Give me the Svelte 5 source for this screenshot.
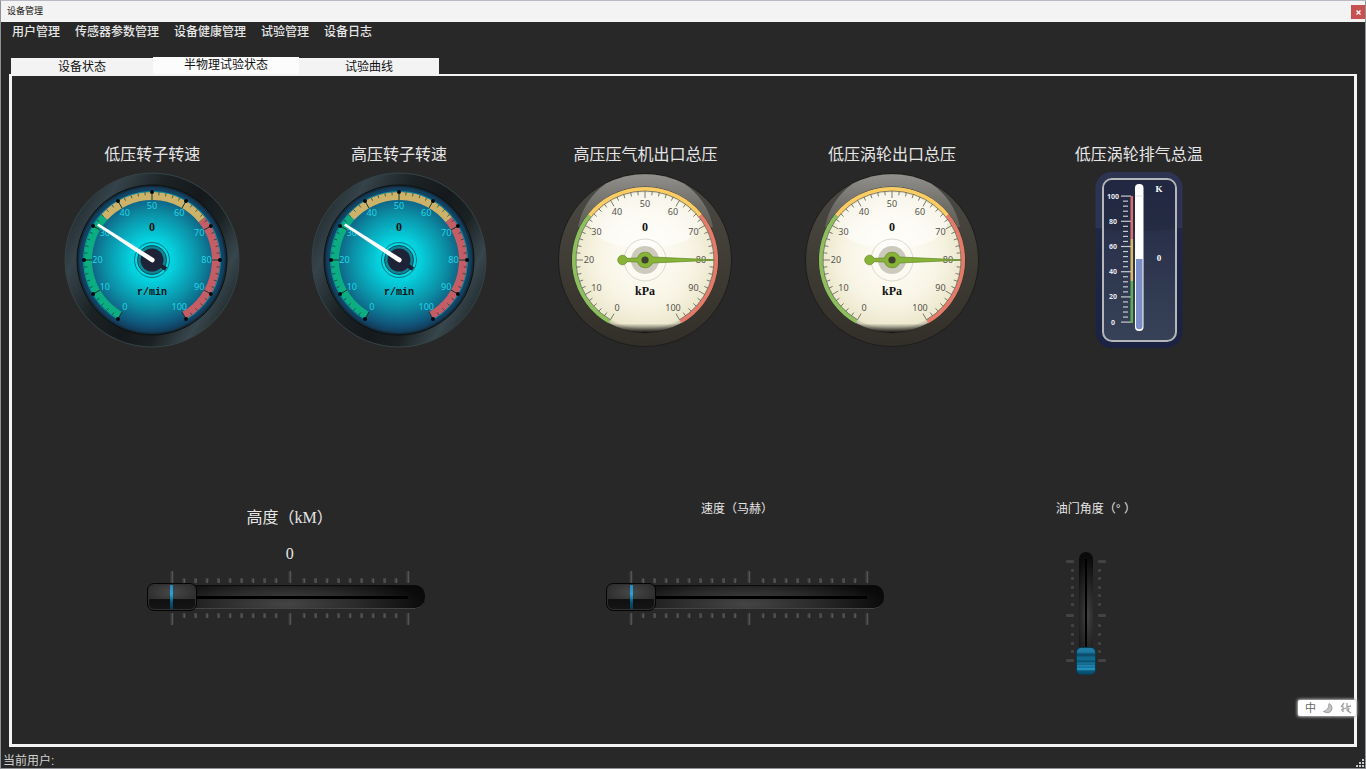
<script lang="ts">
  interface Gauge {
    title: string;
    unit: string;
    kind: "blue" | "light";
  }

  const menus = ["用户管理", "传感器参数管理", "设备健康管理", "试验管理", "设备日志"];
  const tabs = ["设备状态", "半物理试验状态", "试验曲线"];
  const gauges: Gauge[] = [
    { title: "低压转子转速", unit: "r/min", kind: "blue" },
    { title: "高压转子转速", unit: "r/min", kind: "blue" },
    { title: "高压压气机出口总压", unit: "kPa", kind: "light" },
    { title: "低压涡轮出口总压", unit: "kPa", kind: "light" },
  ];

  let activeTab = $state(1);
  let height = $state(0);
  let speed = $state(0);
  let throttle = $state(0);

  // 0..100 runs clockwise from lower left to lower right, 3 degrees per unit
  function pt(value: number, r: number) {
    const a = ((value * 3 + 120) * Math.PI) / 180;
    return { x: 88 + r * Math.cos(a), y: 88 + r * Math.sin(a) };
  }

  // spans up to 60 units, longer ones are drawn in two halves
  function arc(from: number, to: number, r: number) {
    const a = pt(from, r);
    const b = pt(to, r);
    return `M${a.x} ${a.y}A${r} ${r} 0 0 1 ${b.x} ${b.y}`;
  }

  const tens = Array.from({ length: 11 }, (_, i) => i * 10);
  const ticks = Array.from({ length: 51 }, (_, i) => i * 2);

  // slider scale, major marks at both ends and in the middle
  const hMajor = [25, 143, 261];
  const hMinor = [...Array(9).keys()].flatMap((i) => [37 + i * 11.5, 157 + i * 11.5]);
  const vMajor = [9, 63, 108];
  const vMinor = [18, 26, 35, 43, 52, 73, 82, 91, 99];

  const thermoMarks = Array.from({ length: 26 }, (_, i) => ({ v: 100 - i * 4, y: 24.5 + i * 5.04 }));
</script>

{#snippet defs()}
  <svg class="defs" width="0" height="0" aria-hidden="true">
    <defs>
      <linearGradient id="rim" x1="0" y1="0.22" x2="1" y2="0.78">
        <stop offset="0" stop-color="#20282b" />
        <stop offset="0.16" stop-color="#35434a" />
        <stop offset="0.36" stop-color="#1c2325" />
        <stop offset="0.55" stop-color="#15191b" />
        <stop offset="0.7" stop-color="#1b2224" />
        <stop offset="0.85" stop-color="#38474d" />
        <stop offset="1" stop-color="#1b2224" />
      </linearGradient>
      <radialGradient id="face">
        <stop offset="0" stop-color="#00eef5" />
        <stop offset="0.3" stop-color="#05cfdc" />
        <stop offset="0.65" stop-color="#0b8ea5" />
        <stop offset="0.9" stop-color="#11547a" />
        <stop offset="1" stop-color="#123a57" />
      </radialGradient>
      <linearGradient id="bezel" x1="0" y1="0" x2="0" y2="1">
        <stop offset="0" stop-color="#4d4b46" />
        <stop offset="0.5" stop-color="#3f3d35" />
        <stop offset="1" stop-color="#312f28" />
      </linearGradient>
      <linearGradient id="glare" x1="0" y1="0" x2="0" y2="1">
        <stop offset="0" stop-color="#92908c" />
        <stop offset="0.6" stop-color="#706e69" />
        <stop offset="1" stop-color="#625f57" />
      </linearGradient>
      <radialGradient id="cream" cx="0.5" cy="0.48" r="0.52">
        <stop offset="0" stop-color="#fffef9" />
        <stop offset="0.6" stop-color="#f8f5e6" />
        <stop offset="0.93" stop-color="#ece8cd" />
        <stop offset="1" stop-color="#a9a693" />
      </radialGradient>
      <linearGradient id="lowshade" x1="0" y1="0" x2="0" y2="1">
        <stop offset="0.935" stop-color="#000" stop-opacity="0" />
        <stop offset="1" stop-color="#000" stop-opacity="0.9" />
      </linearGradient>
      <linearGradient id="plate" x1="0" y1="0" x2="0" y2="1">
        <stop offset="0" stop-color="#222943" />
        <stop offset="1" stop-color="#374258" />
      </linearGradient>
      <linearGradient id="case" x1="0" y1="0" x2="0" y2="1">
        <stop offset="0" stop-color="#232a46" />
        <stop offset="1" stop-color="#1b2242" />
      </linearGradient>
    </defs>
  </svg>
{/snippet}

{#snippet blueGauge(unit: string)}
  <svg class="dial blue" width="176" height="176" viewBox="0 0 176 176">
    <circle cx="88" cy="88" r="87" fill="url(#rim)" stroke="#344448" />
    <circle cx="88" cy="88" r="75" fill="#142a38" stroke="#0c1012" />
    <circle cx="88" cy="88" r="73" fill="url(#face)" />
    <path d={arc(0, 50, 68.5) + arc(50, 100, 68.5)} fill="none" stroke="#0997ab" />
    <path d={arc(0, 34, 64)} class="band" stroke="#0cad82" />
    <path d={arc(34, 67, 64)} class="band" stroke="#cdb369" />
    <path d={arc(67, 100, 64)} class="band" stroke="#c45d65" />
    {#each ticks as v}
      {@const a = pt(v, v % 10 ? 65 : 60)}
      {@const b = pt(v, 68)}
      <line x1={a.x} y1={a.y} x2={b.x} y2={b.y} stroke="#17352f" stroke-width={v % 10 ? 0.7 : 1} />
    {/each}
    {#each tens as v}
      {@const d = pt(v, 68)}
      {@const l = pt(v, 54.5)}
      <circle cx={d.x} cy={d.y} r="2" fill="#02090c" />
      <text class="num" x={l.x} y={l.y + 3}>{v}</text>
    {/each}
    <circle cx="88" cy="88" r="17.5" fill="none" stroke="#0b5d68" stroke-width="0.8" />
    <circle cx="88" cy="88" r="14.5" fill="#0e8797" stroke="#0b3440" stroke-width="0.8" />
    <path d="M88 88L102 97" stroke="#1c2030" stroke-width="4" />
    <circle cx="88" cy="88" r="11.5" fill="#1f2337" />
    <path d="M33 53.500L34.500 51.500L89.500 86A2 2 0 0 1 87 90Z" fill="#fff" />
    <text class="val" x="88" y="59">0</text>
    <text class="unit mono" x="88" y="123">{unit}</text>
  </svg>
{/snippet}

{#snippet lightGauge(unit: string)}
  <svg class="dial light" width="176" height="176" viewBox="0 0 176 176">
    <circle cx="88" cy="88" r="86.5" fill="url(#bezel)" stroke="#1e1d1a" />
    <path d="M21 55A70 70 0 0 1 49 11.500A86 86 0 0 1 127 11.500A70 70 0 0 1 156 55Z" fill="url(#glare)" />
    <circle cx="88" cy="88" r="73" fill="url(#cream)" stroke="#2b2a25" stroke-width="0.8" />
    <circle cx="88" cy="88" r="73" fill="url(#lowshade)" />
    <path d="M32 50A68 68 0 0 1 144 50Q137 76 88 76Q39 76 32 50Z" fill="#fff" opacity="0.5" />
    <path d={arc(0, 33, 71)} class="edge" stroke="#8cc05c" />
    <path d={arc(33, 67, 71)} class="edge" stroke="#fccd62" />
    <path d={arc(67, 100, 71)} class="edge" stroke="#e67a69" />
    <path d={arc(0, 50, 69) + arc(50, 100, 69)} fill="none" stroke="#5c5a50" stroke-width="0.7" />
    {#each ticks as v}
      {@const a = pt(v, v % 10 ? 65 : 62)}
      {@const b = pt(v, 69)}
      <line x1={a.x} y1={a.y} x2={b.x} y2={b.y} stroke="#5c5a50" stroke-width="0.8" />
    {/each}
    {#each tens as v}
      {@const l = pt(v, 56)}
      <text class="num" x={l.x} y={l.y + 3}>{v}</text>
    {/each}
    <circle cx="88" cy="88" r="21" fill="none" stroke="#d2d0c4" stroke-width="0.8" />
    <circle cx="88" cy="88" r="14" fill="#cccabc" />
    <path
      d="M70 86.300A4.800 4.800 0 1 0 70 89.700L80.500 90A8 8 0 0 0 95.500 91L157 88.200V87.800L95.500 85A8 8 0 0 0 80.500 86Z"
      fill="#87b336"
      stroke="#61852a"
      stroke-width="0.7"
    />
    <circle cx="88" cy="88" r="3.600" fill="#3e4030" />
    <text class="val" x="88" y="59">0</text>
    <text class="unit" x="88" y="123">{unit}</text>
  </svg>
{/snippet}

{#snippet scale(bottom: boolean)}
  <svg width="278" height="12" viewBox="0 0 278 12" aria-hidden="true">
    {#each hMajor as x}
      <rect x={x - 1.5} y="0" width="3" height="12" rx="1" fill="#3f3f3f" />
      <rect {x} y="0" width="1" height="12" fill="#545454" />
    {/each}
    {#each hMinor as x}
      <rect x={x - 1.5} y={bottom ? 0 : 7} width="3" height="5" rx="1" fill="#444" />
      <rect {x} y={bottom ? 1 : 8} width="1" height="4" fill="#595959" />
    {/each}
  </svg>
{/snippet}

{#snippet vscale(right: boolean)}
  <svg width="8" height="123" viewBox="0 0 8 123" aria-hidden="true">
    {#each vMajor as y}
      <rect x="0" y={y - 1} width="8" height="3" rx="1" fill="#434343" />
    {/each}
    {#each vMinor as y}
      <rect x={right ? 0 : 5} y={y - 1} width="3" height="3" rx="1" fill="#444" />
    {/each}
  </svg>
{/snippet}

<div class="window">
  {@render defs()}
  <header class="titlebar">
    <span>设备管理</span>
    <button class="close" aria-label="关闭">
      <svg width="5" height="5" viewBox="0 0 5 5"><path d="M0.500 0.500L4.500 4.500M4.500 0.500L0.500 4.500" stroke="#fff" stroke-width="1.300" /></svg>
    </button>
  </header>

  <nav class="menubar">
    {#each menus as m}
      <button>{m}</button>
    {/each}
  </nav>

  <div class="tabs" role="tablist">
    {#each tabs as t, i}
      <button role="tab" class:active={activeTab === i} aria-selected={activeTab === i} onclick={() => (activeTab = i)}>{t}</button>
    {/each}
  </div>

  <main class="panel">
    <section class="gauges">
      {#each gauges as g}
        <div class="gauge">
          <h2>{g.title}</h2>
          {#if g.kind === "blue"}
            {@render blueGauge(g.unit)}
          {:else}
            {@render lightGauge(g.unit)}
          {/if}
        </div>
      {/each}
      <div class="gauge">
        <h2>低压涡轮排气总温</h2>
        <svg class="thermo" width="88" height="176" viewBox="0 0 88 176">
          <rect x="0.500" y="0" width="87" height="176" rx="16" fill="url(#case)" />
          <path d="M0.500 56V16A16 16 0 0 1 16.500 0H71.500A16 16 0 0 1 87.500 16V56Q44 62 0.500 56Z" fill="#2c3452" />
          <rect x="8" y="7" width="73" height="162" rx="9" fill="url(#plate)" stroke="#b4b6ba" stroke-width="2" />
          <path d="M9 57V17A8 8 0 0 1 17 8H72A8 8 0 0 1 80 17V57Q44 61 9 57Z" fill="#20263d" opacity="0.5" />
          {#each thermoMarks as m}
            {#if m.v % 20 === 0}
              <rect x="26" y={m.y - 1} width="10" height="1.2" fill="#c8cad0" />
              <text class="tnum" x="18" y={m.y + 2}>{m.v}</text>
            {:else}
              <rect x="28" y={m.y - 1} width="5" height="1.2" fill="#c8cad0" />
            {/if}
          {/each}
          <rect x="35.500" y="24" width="2.500" height="43" fill="#da6e6c" />
          <rect x="35.500" y="67" width="2.500" height="42" fill="#dcb866" />
          <rect x="35.500" y="109" width="2.500" height="42" fill="#5fad52" />
          <rect x="40" y="12" width="8.500" height="147" rx="4" fill="#fff" />
          <path d="M41 87H47.500V154A3.200 3.200 0 0 1 41 154Z" fill="#7b8dc6" />
          <path d="M40 24H48.500" stroke="#ddd" stroke-width="0.800" />
          <text class="tval" x="64" y="20">K</text>
          <text class="tval" x="64" y="89">0</text>
        </svg>
      </div>
    </section>

    <section class="sliders">
      <div class="control alt">
        <label class="big" for="alt">高度（kM）</label>
        <output for="alt">{height}</output>
        <div class="hslider">
          {@render scale(false)}
          <input id="alt" type="range" min="0" max="100" bind:value={height} />
          {@render scale(true)}
        </div>
      </div>
      <div class="control mach">
        <label for="mach">速度（马赫）</label>
        <div class="hslider">
          {@render scale(false)}
          <input id="mach" type="range" min="0" max="100" bind:value={speed} />
          {@render scale(true)}
        </div>
      </div>
      <div class="control angle">
        <label for="angle">油门角度（°&nbsp;）</label>
        <div class="vslider">
          {@render vscale(false)}
          <input id="angle" type="range" min="0" max="100" bind:value={throttle} />
          {@render vscale(true)}
        </div>
      </div>
    </section>
  </main>

  <footer class="statusbar">
    <span>当前用户:</span>
    <svg width="9" height="9" viewBox="0 0 9 9" aria-hidden="true">
      <path d="M6 0h2v2h-2zM3 3h2v2h-2zM6 3h2v2h-2zM0 6h2v2h-2zM3 6h2v2h-2zM6 6h2v2h-2z" fill="#c9c9c9" />
    </svg>
  </footer>

  <div class="ime">
    <span>中</span>
    <svg width="10" height="12" viewBox="0 0 10 12"><path d="M6 1.500Q6 8 0.500 9.500Q7 13 9 7Q9.500 3 6 1.500Z" fill="#c4c4c4" stroke="#8d8d8d" stroke-width="0.800" /></svg>
    <svg width="12" height="12" viewBox="0 0 12 12"><path d="M4 1L1 5M3 4V10M1 8L6 6M7 1V8L11 11M7 5L11 4M9 6L8 10" fill="none" stroke="#a0a0a0" stroke-width="1.300" /></svg>
  </div>
</div>

<style>
  :global(body) {
    background: #282828;
  }

  .window {
    position: relative;
    box-sizing: border-box;
    min-height: 100vh;
    display: flex;
    flex-direction: column;
    border: 1px solid #8f9196;
    border-top-color: #b9b9c3;
    background: #282828;
    color: #e6e6e6;
    font-family: "Liberation Sans", "Noto Sans CJK SC", sans-serif;
    font-size: 12px;
  }

  .defs {
    position: absolute;
  }

  button {
    border: 0;
    padding: 0;
    background: none;
    color: inherit;
    font: inherit;
  }

  .titlebar {
    display: flex;
    justify-content: space-between;
    height: 21px;
    padding-left: 6px;
    background: #f3f3f3;
    color: #111;
    font-size: 9px;
    line-height: 20px;
  }

  .close {
    display: flex;
    align-items: center;
    justify-content: center;
    width: 14px;
    height: 14px;
    margin-top: 4px;
    background: #c75050;
  }

  .menubar {
    display: flex;
    gap: 15px;
    padding: 0 11px;
    height: 35px;
    font-weight: 500;
    line-height: 20px;
  }

  .menubar button {
    height: 20px;
  }

  .tabs {
    display: flex;
    align-items: flex-end;
    height: 17px;
    padding-left: 10px;
  }

  .tabs button {
    width: 142px;
    height: 16px;
    background: #f3f3f3;
    color: #111;
    line-height: 18px;
  }

  .tabs button:last-child {
    width: 140px;
  }

  .tabs button.active {
    width: 146px;
    height: 17px;
    background: #fcfcfc;
    line-height: 17px;
  }

  .panel {
    flex: 1;
    margin: 0 8px;
    border: 3px solid #f4f4f4;
    border-top-width: 2px;
  }

  .gauges {
    display: grid;
    grid-template-columns: repeat(5, 1fr);
    padding: 68px 92px 0 17px;
  }

  .gauge {
    display: flex;
    flex-direction: column;
    align-items: center;
    gap: 6px;
  }

  h2 {
    margin: 0;
    font-size: 16px;
    font-weight: 400;
    line-height: 22px;
    white-space: nowrap;
  }

  text {
    text-anchor: middle;
  }

  .num {
    font: 9px "Noto Sans", sans-serif;
  }

  .blue .num {
    fill: #22d6e4;
  }

  .light .num {
    fill: #55534c;
  }

  .val,
  .unit {
    fill: #111;
    font: bold 12px "Liberation Serif", serif;
  }

  .mono {
    font: bold 10px "Liberation Mono", monospace;
  }

  .band {
    fill: none;
    stroke-width: 8;
  }

  .edge {
    fill: none;
    stroke-width: 4;
  }

  .tnum {
    fill: #e8e8ee;
    font: bold 7px "Noto Sans", sans-serif;
  }

  .tval {
    fill: #fff;
    font: bold 9px "Liberation Serif", serif;
  }

  .sliders {
    display: grid;
    grid-template-columns: 459fr 459fr 242fr;
    padding: 150px 137px 0 44px;
  }

  .control {
    display: flex;
    flex-direction: column;
    align-items: center;
  }

  .control label {
    line-height: 22px;
    white-space: nowrap;
  }

  .control .big {
    font-family: "Liberation Serif", "Noto Sans CJK SC", serif;
    font-size: 16px;
  }

  .alt {
    padding-top: 9px;
  }

  .alt label,
  .alt output {
    padding-left: 8px;
  }

  output {
    margin: 15px 0 7px;
    font: 16px/20px "Liberation Serif", serif;
  }

  .mach label {
    padding-right: 16px;
    margin-bottom: 51px;
  }

  .angle label {
    margin-bottom: 32px;
  }

  .hslider {
    display: flex;
    flex-direction: column;
    width: 278px;
  }

  .hslider svg:last-child {
    margin-top: 2px;
  }

  input {
    appearance: none;
    margin: 0;
    background: none;
  }

  .hslider input {
    width: 278px;
    height: 28px;
  }

  .hslider input::-webkit-slider-runnable-track {
    height: 24px;
    border-radius: 10px;
    background:
      linear-gradient(#000, #000) 50% 50% / 244px 3px no-repeat,
      radial-gradient(ellipse 140px 30px at 50% 80%, #454545, #2b2b2b 50%, #0a0a0a);
    box-shadow: inset 0 1px 1px #0a0a0a, inset 0 -1px 0 #444;
  }

  .hslider input::-webkit-slider-thumb {
    appearance: none;
    width: 50px;
    height: 28px;
    margin-top: -2px;
    border: 1px solid #050505;
    border-radius: 7px;
    background:
      linear-gradient(#1d86b8, #2aa3dc 40%, #08516f 70%, #07394e) 50% 50% / 3px 28px no-repeat,
      radial-gradient(ellipse 30px 14px at 50% 55%, #484848, #2a2a2a 98%, transparent) 0 0 / 100% 58% no-repeat,
      linear-gradient(#2b2b2b, #292929 55%, #101010 60%, #151515);
    box-shadow: inset 0 0 0 1px #303030;
  }

  .vslider {
    display: flex;
    gap: 2px;
    margin-right: 20px;
  }

  .vslider input {
    width: 20px;
    height: 123px;
    writing-mode: vertical-lr;
    direction: rtl;
  }

  .vslider input::-webkit-slider-runnable-track {
    width: 14px;
    border-radius: 7px;
    background:
      linear-gradient(#000, #000) 50% 50% / 2px 110px no-repeat,
      radial-gradient(ellipse 14px 60px at 60% 52%, #434343, #272727 50%, #0a0a0a);
  }

  .vslider input::-webkit-slider-thumb {
    appearance: none;
    width: 20px;
    height: 28px;
    margin-left: -3px;
    border: 1px solid #063b52;
    border-radius: 5px;
    background: linear-gradient(
      #217ba3 0 3px, #176d94 5px, #0b4d6b 6px 8px, #12698e 9px 12px, #0a4f6f 13px 14px,
      #1d84ae 15px, #0d5c7e 16px, #2590bd 18px, #0f6589 19px, #2ba0cf 21px, #0b5575 23px, #0a4d6b
    );
  }

  .statusbar {
    display: flex;
    justify-content: space-between;
    align-items: flex-end;
    height: 21px;
    padding-left: 2px;
    color: #d0d0d0;
    line-height: 16px;
  }

  .statusbar span {
    align-self: center;
    padding-top: 6px;
  }

  .ime {
    position: absolute;
    right: 9px;
    bottom: 52px;
    display: flex;
    align-items: center;
    gap: 7px;
    height: 16px;
    padding: 0 4px 0 7px;
    border-radius: 2px;
    background: #fff;
    box-shadow: 0 0 3px 1px #bbb;
    color: #666;
    font-size: 11px;
    line-height: 16px;
  }
</style>
